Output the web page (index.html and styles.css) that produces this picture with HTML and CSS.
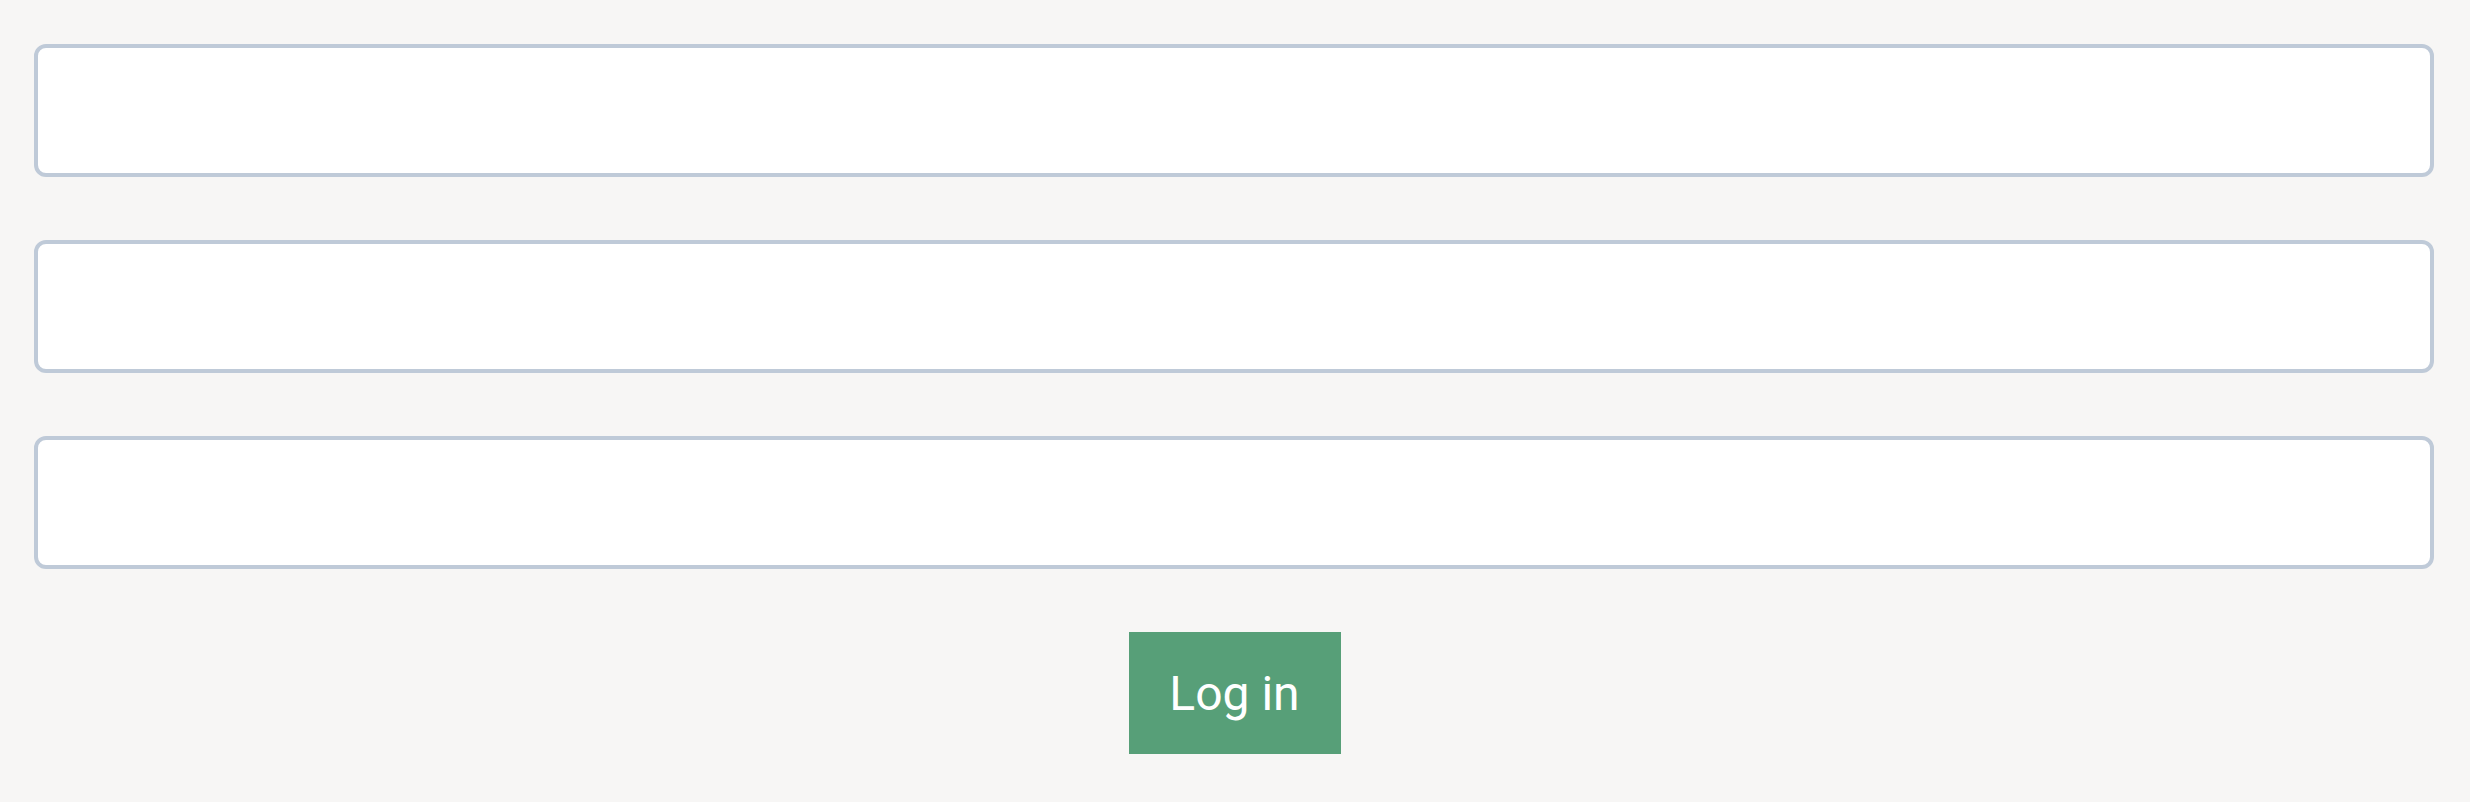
FILE: index.html
```html
<!DOCTYPE html>
<html>
<head>
<meta charset="utf-8">
<link rel="stylesheet" href="styles.css">
</head>
<body>
<form class="login">
  <input class="field" type="text">
  <input class="field" type="password">
  <input class="field" type="text">
  <div class="actions">
    <button class="btn" type="button">Log in</button>
  </div>
</form>
</body>
</html>
```
FILE: styles.css
```css
html, body {
  margin: 0;
  padding: 0;
  background: #f7f6f5;
  font-family: Roboto, "Liberation Sans", sans-serif;
}
.login {
  display: flex;
  flex-direction: column;
  gap: 63px;
  width: 2400px;
  padding: 44px 0 0 34px;
}
.field {
  box-sizing: border-box;
  height: 133px;
  width: 100%;
  margin: 0;
  background: #ffffff;
  border: 4px solid #bfcad8;
  border-radius: 12px;
  outline: none;
}
.actions {
  display: flex;
  justify-content: center;
  padding-left: 1px;
}
.btn {
  box-sizing: border-box;
  width: 212px;
  height: 122px;
  border: none;
  border-radius: 0;
  background: #579f78;
  color: #ffffff;
  font-family: Roboto, "Liberation Sans", sans-serif;
  font-size: 48px;
  font-weight: 400;
  padding: 0;
}
```
